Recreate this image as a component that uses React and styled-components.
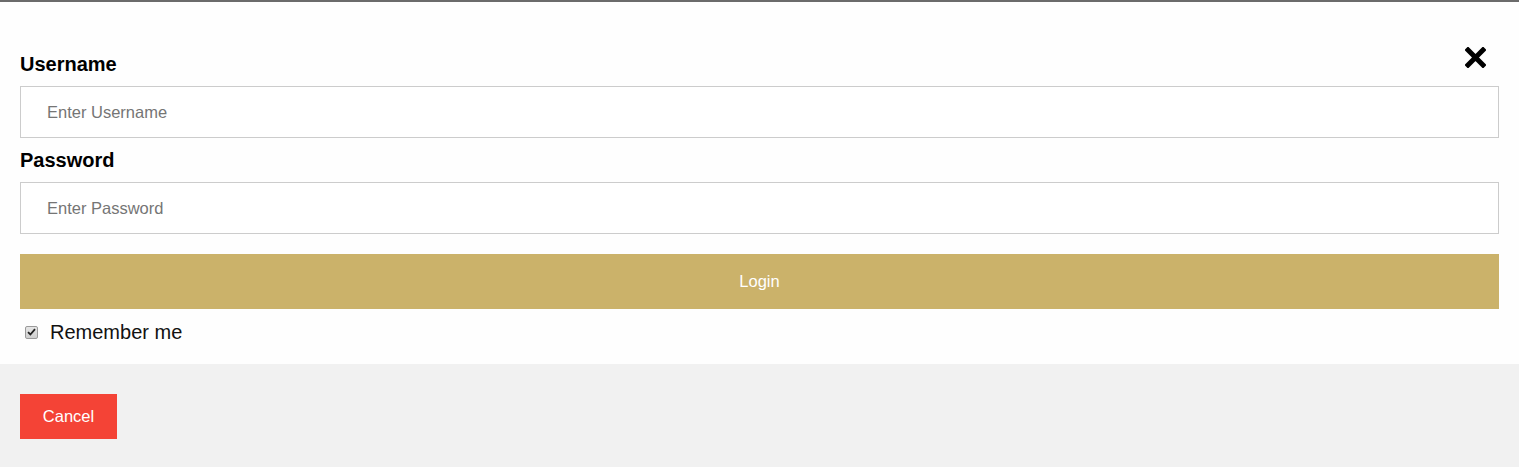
import styled, { createGlobalStyle } from 'styled-components';

const GlobalStyle = createGlobalStyle`
  html, body {
    margin: 0;
    padding: 0;
    background: #ffffff;
  }
  body {
    font-family: 'Liberation Sans', Arial, sans-serif;
  }
`;

const Modal = styled.div`
  position: relative;
  width: 100%;
  border-top: 2px solid #6b6b6b;
  background: #fefefe;
`;

const CloseButton = styled.span`
  position: absolute;
  top: 45px;
  right: 33px;
  width: 21px;
  height: 21px;
  cursor: pointer;
  display: flex;
`;

const Form = styled.div`
  display: flex;
  flex-direction: column;
  padding: 50px 20px 20px;
`;

const Label = styled.label`
  font-size: 20px;
  font-weight: 700;
  line-height: 24px;
  color: #000;
`;

const Input = styled.input`
  box-sizing: border-box;
  width: 100%;
  height: 52px;
  margin: 10px 0;
  padding: 0 26px;
  border: 1px solid #cccccc;
  font-family: 'Liberation Sans', Arial, sans-serif;
  font-size: 16.5px;
  color: #333;
  outline: none;

  &::placeholder {
    color: #757575;
  }
`;

const LoginButton = styled.button`
  height: 55px;
  margin-top: 10px;
  border: none;
  background: #cbb26a;
  color: #fff;
  font-family: 'Liberation Sans', Arial, sans-serif;
  font-size: 16.5px;
  cursor: pointer;
`;

const RememberRow = styled.label`
  display: flex;
  align-items: center;
  gap: 12px;
  margin-top: 11px;
  padding-left: 5px;
  font-size: 20px;
  line-height: 24px;
  color: #111;
`;

const CheckBox = styled.span`
  box-sizing: border-box;
  width: 13px;
  height: 13px;
  border: 1px solid #9a9a9a;
  border-radius: 2px;
  background: linear-gradient(#e6e6e6, #cfcfcf);
  display: flex;
  align-items: center;
  justify-content: center;
`;

const Footer = styled.div`
  background: #f1f1f1;
  padding: 30px 20px;
`;

const CancelButton = styled.button`
  width: 97px;
  height: 45px;
  border: none;
  background: #f44336;
  color: #fff;
  font-family: 'Liberation Sans', Arial, sans-serif;
  font-size: 16.5px;
  cursor: pointer;
`;

const App = () => {
  return (
    <>
      <GlobalStyle />
      <Modal>
        <CloseButton title="Close Modal">
          <svg width="21" height="21" viewBox="0 0 21 21">
            <path d="M3 3 L18 18 M18 3 L3 18" stroke="#000" strokeWidth="5" strokeLinecap="square" />
          </svg>
        </CloseButton>
        <Form>
          <Label>Username</Label>
          <Input type="text" placeholder="Enter Username" />
          <Label>Password</Label>
          <Input type="password" placeholder="Enter Password" />
          <LoginButton>Login</LoginButton>
          <RememberRow>
            <CheckBox>
              <svg width="9" height="8" viewBox="0 0 9 8">
                <path d="M1 4.2 L3.4 6.5 L8 1.2" stroke="#222" strokeWidth="1.8" fill="none" />
              </svg>
            </CheckBox>
            Remember me
          </RememberRow>
        </Form>
        <Footer>
          <CancelButton>Cancel</CancelButton>
        </Footer>
      </Modal>
    </>
  );
};

export default App;
